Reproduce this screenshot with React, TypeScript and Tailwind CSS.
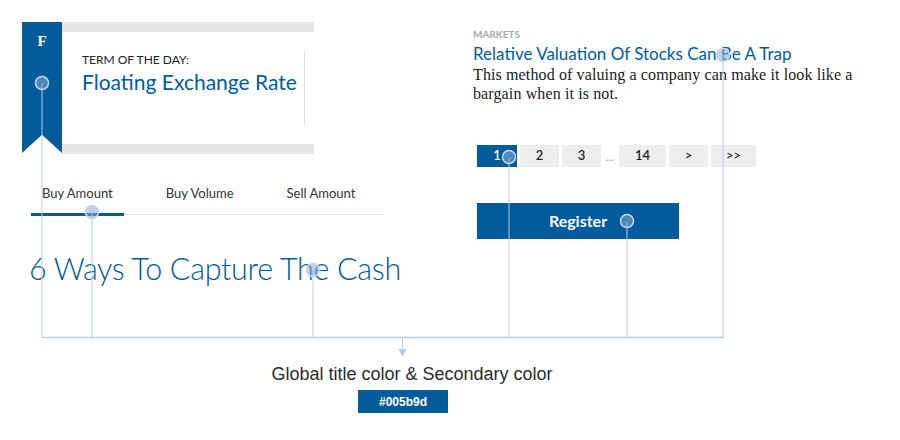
import React from "react";

const BLUE = "bg-[#005b9d]";

const pages = [
  { label: "1", w: "w-[40px]", active: true },
  { label: "2", w: "w-[39px]" },
  { label: "3", w: "w-[39px]" },
  { label: "…", gap: true },
  { label: "14", w: "w-[47px]" },
  { label: ">", w: "w-[39px]" },
  { label: ">>", w: "w-[45px]" },
];

// callout dots: [x, y]
const dots: [number, number][] = [
  [42, 83],
  [92, 212],
  [313, 270],
  [509, 157],
  [627, 221],
  [723, 55],
];

const Callouts = () => (
  <svg
    className="absolute inset-0 pointer-events-none"
    width={900}
    height={440}
    viewBox="0 0 900 440"
  >
    {dots.map(([x, y]) => (
      <line key={`l${x}`} x1={x} y1={y} x2={x} y2={337.5} stroke="#b6cde3" strokeWidth={1} />
    ))}
    <line x1={42} y1={337.5} x2={724} y2={337.5} stroke="#b6cde3" strokeWidth={1.5} />
    <line x1={402.5} y1={337} x2={402.5} y2={350} stroke="#b6cde3" strokeWidth={1} />
    <polygon points="398.5,349 406.5,349 402.5,357" fill="#b6cde3" />
    {dots.map(([x, y]) => (
      <circle
        key={`c${x}`}
        cx={x}
        cy={y}
        r={6.5}
        fill="rgba(140,172,208,0.55)"
        stroke="#c3d7eb"
        strokeWidth={1.5}
      />
    ))}
  </svg>
);

const TermOfTheDay = () => (
  <div className="flex h-[132px] w-[292px]">
    <div
      className={`${BLUE} w-[40px] h-[131px] flex justify-center pt-[12px] [clip-path:polygon(0_0,100%_0,100%_100%,50%_86%,0_100%)]`}
    >
      <span className="font-['Liberation_Serif',serif] font-bold text-white text-[15px] leading-none">F</span>
    </div>
    <div className="flex-1 border-y-[10px] border-[#e4e5e7] flex items-start pt-[21px] pl-[20px] pr-[9px]">
      <div className="flex-1">
        <div className="text-[12px] leading-[14px] text-[#222] uppercase">Term of the day:</div>
        <div className="text-[21px] leading-[30px] text-[#005b9d]">Floating Exchange Rate</div>
      </div>
      <div className="w-px h-[72px] -mt-[1px] bg-[#dcdde0]" />
    </div>
  </div>
);

const Tabs = () => (
  <div className="ml-[9px] w-[352px] flex gap-[31px] border-b border-[#dfe3e8] mt-[30px]">
    {["Buy Amount", "Buy Volume", "Sell Amount"].map((t, i) => (
      <div
        key={t}
        className={
          i === 0
            ? "px-[11px] pb-[9px] text-[13px] leading-[18px] text-[#333] border-b-[3px] border-[#005b9d] -mb-[2px]"
            : "px-[11px] pb-[12px] text-[13px] leading-[18px] text-[#333]"
        }
      >
        {t}
      </div>
    ))}
  </div>
);

const Pagination = () => (
  <div className="flex items-center gap-[3px] ml-[4px] mt-[42px]">
    {pages.map((p) =>
      p.gap ? (
        <span key="gap" className="w-[12px] text-center text-[11px] text-[#999] leading-none">…</span>
      ) : (
        <div
          key={p.label}
          className={`${p.w} h-[22px] flex items-center justify-center text-[13px] font-semibold ${
            p.active ? `${BLUE} text-white` : "bg-[#eeeeee] text-[#222]"
          }`}
        >
          {p.label}
        </div>
      )
    )}
  </div>
);

export default function App() {
  return (
    <div className="relative w-[900px] h-[440px] bg-white overflow-hidden font-['Lato',sans-serif]">
      <div className="flex">
        <div className="pl-[22px] pt-[22px] w-[473px]">
          <TermOfTheDay />
          <Tabs />
          <h1 className="mt-[35px] ml-[7px] text-[30.5px] leading-[37px] font-light text-[#005b9d] tracking-[-0.3px]">
            6 Ways To Capture The Cash
          </h1>
        </div>
        <div className="pt-[27px] w-[400px]">
          <div className="text-[10px] leading-[14px] font-bold text-[#a7a9ac] uppercase">Markets</div>
          <div className="mt-[2px] text-[17px] leading-[22px] text-[#005b9d]">
            Relative Valuation Of Stocks Can Be A Trap
          </div>
          <p className="font-['Liberation_Serif',serif] text-[16px] leading-[19px] tracking-[0.12px] text-[#1a1a1a] w-[395px]">
            This method of valuing a company can make it look like a bargain when it is not.
          </p>
          <Pagination />
          <button
            className={`${BLUE} ml-[4px] mt-[36px] w-[202px] h-[36px] flex items-center justify-center text-white text-[16px] font-bold`}
          >
            Register
          </button>
        </div>
      </div>
      <div className="w-[806px] mt-[76px] flex flex-col items-center">
        <div className="ml-[18px] font-['Liberation_Sans',Arial,sans-serif] text-[18px] leading-[22px] text-[#2b2b2b]">
          Global title color &amp; Secondary color
        </div>
        <div
          className={`${BLUE} mt-[5px] w-[90px] h-[23px] flex items-center justify-center text-white text-[12px] font-bold font-['Liberation_Sans',Arial,sans-serif]`}
        >
          #005b9d
        </div>
      </div>
      <Callouts />
    </div>
  );
}
